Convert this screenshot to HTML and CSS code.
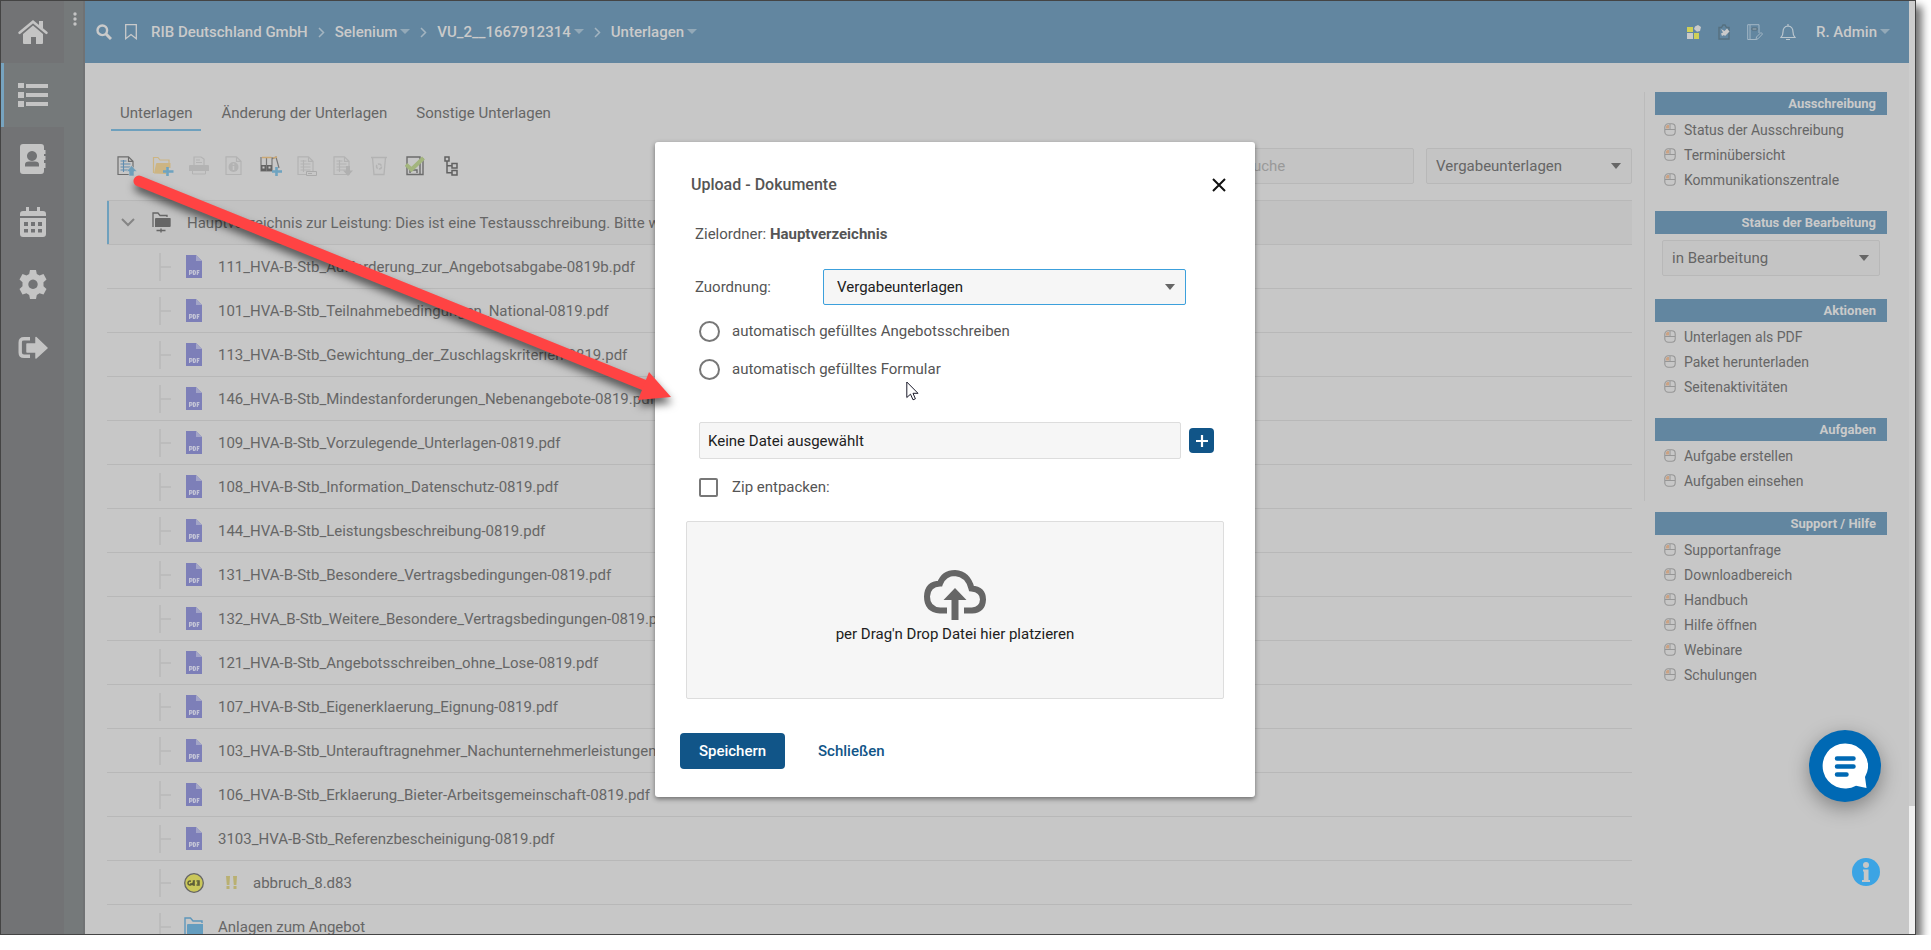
FILE: index.html
```html
<!DOCTYPE html>
<html lang="de">
<head>
<meta charset="utf-8">
<title>Unterlagen</title>
<link rel="stylesheet" href="styles.css">
</head>
<body>
<svg class="defs" aria-hidden="true">
  <symbol id="pdf" viewBox="0 0 16 23"><path fill="#7d7fb8" d="M0 0h10l6 6v17H0z"/><path fill="#a3a5c8" d="M10 0l6 6h-6z"/><path fill="none" stroke="#c3c4d6" stroke-width="1.200" d="M3.600 20v-4.400h1.500q1 0 1 1.300t-1 1.300H3.600M7.500 15.600v3.800h.8q1.200 0 1.200-1.900t-1.200-1.900zM11.300 20v-4.400H13.500M11.300 17.700h1.800"/></symbol>
  <symbol id="mouse" viewBox="0 0 12 13"><rect x=".8" y=".8" width="10.400" height="11.400" rx="3.500" fill="none" stroke="#969696" stroke-width="1.100"/><path d="M6 1v5.500M1 6.500h10" stroke="#969696"/><path d="M2 3.500Q2 2 3.500 2H5v3.500H2z" fill="#cba283"/></symbol>
  <symbol id="tree" viewBox="0 0 12 28"><path d="M1 0v28M1 14h11" stroke="#b9b9b9" stroke-width="1.500" fill="none"/></symbol>
  <symbol id="sheet" viewBox="0 0 20 20"><path d="M1 .8h10.500L16 5.300V18.500H1zM11.500.8v4.500H16" fill="none" stroke="currentColor" stroke-width="1.200"/></symbol>
  <symbol id="lines" viewBox="0 0 20 20"><path d="M3.500 5h6M3.500 8h10M3.500 11h10M3.500 14h10M6.500 4v12" fill="none" stroke="currentColor" stroke-width="1.100"/></symbol>
</svg>

<div class="window">
  <nav class="rail" aria-label="Hauptnavigation">
    <a class="rail-item home" href="#" aria-label="Start"><svg width="30" height="24" viewBox="0 0 30 24"><path fill="currentColor" d="M15 5.500L25 14v9q0 1-1 1h-6v-7h-5v7H6q-1 0-1-1v-9z"/><path fill="none" stroke="currentColor" stroke-width="2.600" stroke-linecap="round" d="M1.600 12.800L15 1.800l13.400 11"/><path fill="currentColor" d="M21 1h4v8l-4-3z"/></svg></a>
    <a class="rail-item active" href="#" aria-label="Liste"><svg width="30" height="26" viewBox="0 0 30 26"><path fill="currentColor" d="M0 1h6v5H0zM8 2h22v4H8zM0 10h6v6H0zM8 11h22v4H8zM0 19h6v6H0zM8 20h22v4H8z"/></svg></a>
    <a class="rail-item" href="#" aria-label="Kontakte"><svg width="28" height="30" viewBox="0 0 28 30"><path fill="currentColor" fill-rule="evenodd" d="M4 0h18q3 0 3 3v3h1.500v4H25v2h1.500v4H25v3h1.500v5H25v3q0 3-3 3H4q-3 0-3-3V3q0-3 3-3zM13 7a5 5 0 1 0 .01 0zM6 22.500h14v-2q0-3-4-3H10q-4 0-4 3z"/></svg></a>
    <a class="rail-item" href="#" aria-label="Kalender"><svg width="26" height="30" viewBox="0 0 26 30"><path fill="currentColor" fill-rule="evenodd" d="M6 0h3v4h8V0h3v4h3q3 0 3 3v2H0V7q0-3 3-3h3zM0 11h26v16q0 3-3 3H3q-3 0-3-3zM4 15v4h4v-4zM11 15v4h4v-4zM18 15v4h4v-4zM4 22v3.500h4V22zM11 22v3.500h4V22zM18 22v3.500h4V22z"/></svg></a>
    <a class="rail-item" href="#" aria-label="Einstellungen"><svg width="28" height="29" viewBox="0 0 28 29"><path fill="currentColor" fill-rule="evenodd" d="M11 0h6l.8 4 2.700 1.500L24.500 4l3 5.500-3 2.700v4l3 2.800-3 5.500-4-1.300L17.800 25 17 29h-6l-.8-4-2.700-1.800-4 1.300-3-5.500 3-2.800v-4L.5 9.500l3-5.500 4 1.500L10.200 4zM14 9.600a4.700 4.700 0 1 0 .01 0z"/></svg></a>
    <a class="rail-item" href="#" aria-label="Abmelden"><svg width="30" height="24" viewBox="0 0 30 24"><path fill="none" stroke="currentColor" stroke-width="3.400" d="M12 2.700H6Q2.200 2.700 2.200 6.500v10Q2.200 20.300 6 20.300h6"/><path fill="currentColor" stroke="currentColor" stroke-width="1.500" stroke-linejoin="round" d="M9 8h9V1.500L29 12 18 22V16H9z"/></svg></a>
  </nav>
  <div class="strip"><button class="dots" type="button" aria-label="Menü"><svg width="4" height="14" viewBox="0 0 4 14"><circle cx="2" cy="2" r="1.700"/><circle cx="2" cy="7" r="1.700"/><circle cx="2" cy="12" r="1.700"/></svg></button></div>

  <div class="page">
    <header class="topbar">
      <svg class="search-icon" width="16" height="16" viewBox="0 0 16 16"><circle cx="6.300" cy="6.300" r="4.800" fill="none" stroke="currentColor" stroke-width="2.400"/><path d="M10 10l5 5" stroke="currentColor" stroke-width="3"/></svg>
      <svg class="mark-icon" width="12" height="16" viewBox="0 0 12 16"><path d="M.7.7h10.600v14L6 10.500.7 14.700z" fill="none" stroke="currentColor" stroke-width="1.300"/></svg>
      <nav class="crumbs" aria-label="Pfad">
        <a href="#">RIB Deutschland GmbH</a>
        <svg class="sep" width="7" height="11" viewBox="0 0 7 11"><path d="M1 1l4.500 4.500L1 10"/></svg>
        <a class="drop" href="#">Selenium</a>
        <svg class="sep" width="7" height="11" viewBox="0 0 7 11"><path d="M1 1l4.500 4.500L1 10"/></svg>
        <a class="drop" href="#">VU_2__1667912314</a>
        <svg class="sep" width="7" height="11" viewBox="0 0 7 11"><path d="M1 1l4.500 4.500L1 10"/></svg>
        <a class="drop" href="#">Unterlagen</a>
      </nav>
      <div class="tools">
        <svg width="14" height="14" viewBox="0 0 14 14"><path fill="#cfcf57" d="M0 2h6v5H0zM7 8h5v6H7z"/><path fill="#cacaca" d="M0 8h6v6H0z"/><path fill="#cacaca" d="M8 1.500L11 0l3 2-1 4-3 .8L7 4z"/></svg>
        <svg width="12" height="16" viewBox="0 0 12 16"><path fill="none" stroke="#56707f" stroke-width="1.400" d="M1 3.500h2.500L5 1h2l1.500 2.500H11V15H1z"/><path fill="#cacaca" d="M3 5l3.500 2L9 4.500l2.500 3L7 12l-1-1-2 1-1-2.500 2-1z"/></svg>
        <svg width="16" height="17" viewBox="0 0 16 17"><path fill="none" stroke="#a3b7c5" d="M9 15.500H.7V.7H12V9M3 1v14.500"/><path stroke="#566c7b" fill="#a3b7c5" d="M5 4h5v2H5z"/><path fill="none" stroke="#a3b7c5" d="M9 15.500l.5-2.500 4.500-4.500 1.500 1.500-4.500 4.800z"/></svg>
        <svg width="16" height="17" viewBox="0 0 16 17"><path fill="none" stroke="#bac6ce" stroke-width="1.200" d="M1 13.500Q3 11.500 3 8q0-5.500 5-6 5 .5 5 6 0 3.500 2 5.500zM8 0v2M6 15.500h4"/></svg>
        <a class="drop user" href="#">R. Admin</a>
      </div>
    </header>

    <div class="content">
      <main class="main">
        <nav class="tabs" aria-label="Bereiche">
          <a class="tab current" href="#">Unterlagen</a>
          <a class="tab" href="#">Änderung der Unterlagen</a>
          <a class="tab" href="#">Sonstige Unterlagen</a>
        </nav>
        <div class="toolbar">
          <button class="tool" type="button" aria-label="Hochladen"><svg width="20" height="20" viewBox="0 0 20 20"><use href="#sheet" color="#6d6d6d"/><use href="#lines" color="#5f8caf"/><path fill="#6f9fba" stroke="#c7c7c7" stroke-width=".6" d="M14.500 9.500l5.500 6h-3V20h-5v-4.500H9.500z"/></svg></button>
          <button class="tool" type="button" aria-label="Neuer Ordner"><svg width="22" height="20" viewBox="0 0 22 20"><path fill="none" stroke="#cdb583" stroke-width="1.200" d="M1.500 17V1.500H6L8 4h9v3"/><path fill="#cdb583" d="M2 17.500L4 8q.3-1 1-1h13.500v5H14v6z"/><path stroke="#6ea3c0" stroke-width="2.600" d="M15.500 11v9M11 15.500h10.500"/></svg></button>
          <button class="tool" type="button" aria-label="Drucken"><svg width="20" height="20" viewBox="0 0 20 20"><path fill="none" stroke="#b3b3b3" stroke-width="1.200" d="M5 9V1h7l3 2v6M7 4h4M7 6.500h6"/><path fill="#b3b3b3" d="M1 9h18q1 0 1 1v5H0v-5q0-1 1-1z"/><path fill="none" stroke="#b3b3b3" d="M3.500 15v3h13v-3"/></svg></button>
          <button class="tool" type="button" aria-label="Information"><svg width="20" height="20" viewBox="0 0 20 20"><g color="#b3b3b3"><use href="#sheet"/></g><circle cx="8.500" cy="11" r="5" fill="#b3b3b3"/><path d="M8.500 7.500v1.300M8.500 10v4" stroke="#c7c7c7" stroke-width="1.600"/></svg></button>
          <button class="tool" type="button" aria-label="Ordner hinzufügen"><svg width="22" height="20" viewBox="0 0 22 20"><path fill="none" stroke="#777" stroke-width="1.200" d="M1 1v14h11V1M6.500 1v14M12 3l4-2 3 11"/><path stroke="#cba873" stroke-width="1.500" d="M2 1.500h9.500M13 2l4-1"/><path fill="#636363" d="M1 9h5v6H1zM7 9h5v6H7z"/><path fill="#c7c7c7" d="M2.500 10.500h2v2h-2zM8.500 10.500h2v2h-2z"/><path stroke="#6ea3c0" stroke-width="2.600" d="M16.500 11v9M12 15.500h10"/></svg></button>
          <button class="tool" type="button" aria-label="Umbenennen"><svg width="20" height="20" viewBox="0 0 20 20"><g color="#b3b3b3"><use href="#sheet"/><use href="#lines"/></g><path fill="#c7c7c7" stroke="#aaa" d="M9.500 15.500h10v4h-10zM11 17.500h4"/></svg></button>
          <button class="tool" type="button" aria-label="Herunterladen"><svg width="20" height="20" viewBox="0 0 20 20"><g color="#b3b3b3"><use href="#sheet"/><use href="#lines"/></g><path fill="#b0b0b0" d="M13 10h4v4.500h3L15 20l-5-5.500h3z"/></svg></button>
          <button class="tool" type="button" aria-label="Löschen"><svg width="18" height="20" viewBox="0 0 18 20"><path fill="none" stroke="#b3b3b3" stroke-width="1.300" d="M1 1.500h16M2.500 1.500L4 18.500h10l1.500-17"/><circle cx="9" cy="10.500" r="2.500" fill="none" stroke="#b3b3b3" stroke-width="1.500" stroke-dasharray="4 1.200"/></svg></button>
          <button class="tool" type="button" aria-label="Prüfen"><svg width="20" height="20" viewBox="0 0 20 20"><path fill="none" stroke="#6c6c6c" stroke-width="1.400" d="M2 18.500V1h13v17.500zM15 3h3v15.500h-3M5 17v-3h7v3"/><path fill="none" stroke="#a3b57e" stroke-width="4" d="M1 8.500l5.500 5L18.500 2"/></svg></button>
          <button class="tool" type="button" aria-label="Baumansicht"><svg width="16" height="20" viewBox="0 0 16 20"><path fill="none" stroke="#616161" stroke-width="1.500" d="M2 1h4v4H2zM9 7.500h5V12H9zM9 14.500h5V19H9zM4 5v11.700h5M4 9.700h5"/></svg></button>
          <input class="field find" type="text" aria-label="Suche" placeholder="Suche">
          <select class="field kind" aria-label="Unterlagenart"><option>Vergabeunterlagen</option></select>
        </div>
        <ul class="files">
          <li class="row root"><svg width="14" height="9" viewBox="0 0 14 9"><path d="M1 1l6 6 6-6" fill="none" stroke="#858585" stroke-width="2"/></svg><svg class="root-icon" width="19" height="21" viewBox="0 0 19 21"><path fill="none" stroke="#666" stroke-width="1.300" d="M1 15V1h5l2 2.500h7V5"/><path fill="#666" d="M4 6h14q.7 0 .7.700V14q0 1-1 1H3V7q0-1 1-1z"/><path fill="none" stroke="#666" stroke-width="1.400" d="M4.500 18.500h9M9 16.500v4"/></svg><span>Hauptverzeichnis zur Leistung: Dies ist eine Testausschreibung. Bitte w</span></li>
          <li class="row"><svg class="branch"><use href="#tree"/></svg><svg class="pdf"><use href="#pdf"/></svg><span>111_HVA-B-Stb_Aufforderung_zur_Angebotsabgabe-0819b.pdf</span></li>
          <li class="row"><svg class="branch"><use href="#tree"/></svg><svg class="pdf"><use href="#pdf"/></svg><span>101_HVA-B-Stb_Teilnahmebedingungen_National-0819.pdf</span></li>
          <li class="row"><svg class="branch"><use href="#tree"/></svg><svg class="pdf"><use href="#pdf"/></svg><span>113_HVA-B-Stb_Gewichtung_der_Zuschlagskriterien-0819.pdf</span></li>
          <li class="row"><svg class="branch"><use href="#tree"/></svg><svg class="pdf"><use href="#pdf"/></svg><span>146_HVA-B-Stb_Mindestanforderungen_Nebenangebote-0819.pdf</span></li>
          <li class="row"><svg class="branch"><use href="#tree"/></svg><svg class="pdf"><use href="#pdf"/></svg><span>109_HVA-B-Stb_Vorzulegende_Unterlagen-0819.pdf</span></li>
          <li class="row"><svg class="branch"><use href="#tree"/></svg><svg class="pdf"><use href="#pdf"/></svg><span>108_HVA-B-Stb_Information_Datenschutz-0819.pdf</span></li>
          <li class="row"><svg class="branch"><use href="#tree"/></svg><svg class="pdf"><use href="#pdf"/></svg><span>144_HVA-B-Stb_Leistungsbeschreibung-0819.pdf</span></li>
          <li class="row"><svg class="branch"><use href="#tree"/></svg><svg class="pdf"><use href="#pdf"/></svg><span>131_HVA-B-Stb_Besondere_Vertragsbedingungen-0819.pdf</span></li>
          <li class="row"><svg class="branch"><use href="#tree"/></svg><svg class="pdf"><use href="#pdf"/></svg><span>132_HVA_B-Stb_Weitere_Besondere_Vertragsbedingungen-0819.pdf</span></li>
          <li class="row"><svg class="branch"><use href="#tree"/></svg><svg class="pdf"><use href="#pdf"/></svg><span>121_HVA-B-Stb_Angebotsschreiben_ohne_Lose-0819.pdf</span></li>
          <li class="row"><svg class="branch"><use href="#tree"/></svg><svg class="pdf"><use href="#pdf"/></svg><span>107_HVA-B-Stb_Eigenerklaerung_Eignung-0819.pdf</span></li>
          <li class="row"><svg class="branch"><use href="#tree"/></svg><svg class="pdf"><use href="#pdf"/></svg><span>103_HVA-B-Stb_Unterauftragnehmer_Nachunternehmerleistungen-</span></li>
          <li class="row"><svg class="branch"><use href="#tree"/></svg><svg class="pdf"><use href="#pdf"/></svg><span>106_HVA-B-Stb_Erklaerung_Bieter-Arbeitsgemeinschaft-0819.pdf</span></li>
          <li class="row"><svg class="branch"><use href="#tree"/></svg><svg class="pdf"><use href="#pdf"/></svg><span>3103_HVA-B-Stb_Referenzbescheinigung-0819.pdf</span></li>
          <li class="row"><svg class="branch"><use href="#tree"/></svg><svg class="round" width="20" height="20" viewBox="0 0 20 20"><circle cx="10" cy="10" r="9.300" fill="#cac75a" stroke="#666" stroke-width="1.300"/><path fill="none" stroke="#5d5d38" stroke-width="1.500" d="M7 8.300Q4 7.500 4 10t3 1.700V10M8 12l2-4M11 8h-1.500v4H11M9.500 10H11M12.500 8H15v4h-2.500M13 10h2"/></svg><svg class="alert" width="11" height="13" viewBox="0 0 11 13"><path fill="#b9b072" d="M0 0h4l-.6 9H.8zM.5 10h3v3h-3zM7 0h4l-.6 9H7.800zM7.500 10h3v3h-3z"/></svg><span>abbruch_8.d83</span></li>
          <li class="row"><svg class="branch"><use href="#tree"/></svg><svg class="round" width="20" height="20" viewBox="0 0 20 20"><path fill="none" stroke="#5e97bb" stroke-width="1.400" d="M1 18V1h5.500l2.500 3h9v2"/><path fill="#649dbf" d="M4 7h15v12H3V8q0-1 1-1z"/></svg><span>Anlagen zum Angebot</span></li>
        </ul>
      </main>

      <aside class="side">
        <div class="side-top">
          <section><h2>Ausschreibung</h2><ul>
            <li><svg class="mouse"><use href="#mouse"/></svg><a href="#">Status der Ausschreibung</a></li>
            <li><svg class="mouse"><use href="#mouse"/></svg><a href="#">Terminübersicht</a></li>
            <li><svg class="mouse"><use href="#mouse"/></svg><a href="#">Kommunikationszentrale</a></li></ul></section>
          <section><h2>Status der Bearbeitung</h2>
            <select class="field status" aria-label="Status der Bearbeitung"><option>in Bearbeitung</option></select></section>
          <section><h2>Aktionen</h2><ul>
            <li><svg class="mouse"><use href="#mouse"/></svg><a href="#">Unterlagen als PDF</a></li>
            <li><svg class="mouse"><use href="#mouse"/></svg><a href="#">Paket herunterladen</a></li>
            <li><svg class="mouse"><use href="#mouse"/></svg><a href="#">Seitenaktivitäten</a></li></ul></section>
          <section><h2>Aufgaben</h2><ul>
            <li><svg class="mouse"><use href="#mouse"/></svg><a href="#">Aufgabe erstellen</a></li>
            <li><svg class="mouse"><use href="#mouse"/></svg><a href="#">Aufgaben einsehen</a></li></ul></section>
        </div>
        <section class="support"><h2>Support / Hilfe</h2><ul>
          <li><svg class="mouse"><use href="#mouse"/></svg><a href="#">Supportanfrage</a></li>
          <li><svg class="mouse"><use href="#mouse"/></svg><a href="#">Downloadbereich</a></li>
          <li><svg class="mouse"><use href="#mouse"/></svg><a href="#">Handbuch</a></li>
          <li><svg class="mouse"><use href="#mouse"/></svg><a href="#">Hilfe öffnen</a></li>
          <li><svg class="mouse"><use href="#mouse"/></svg><a href="#">Webinare</a></li>
          <li><svg class="mouse"><use href="#mouse"/></svg><a href="#">Schulungen</a></li></ul></section>
      </aside>
    </div>
  </div>
  <div class="scroll"><div class="scroll-rest"></div></div>

  <div class="overlay">
    <form class="dialog" role="dialog" aria-labelledby="dialog-title">
      <div class="dialog-head">
        <h1 id="dialog-title">Upload - Dokumente</h1>
        <button class="close" type="button" aria-label="Dialog schließen"><svg width="14" height="14" viewBox="0 0 14 14"><path d="M1 1l12 12M13 1L1 13" stroke="#111" stroke-width="2"/></svg></button>
      </div>
      <p class="target">Zielordner: <b>Hauptverzeichnis</b></p>
      <div class="assign"><label for="assign">Zuordnung:</label><select class="field" id="assign"><option>Vergabeunterlagen</option></select></div>
      <label class="choice"><input type="radio" name="auto"><span>automatisch gefülltes Angebotsschreiben</span></label>
      <label class="choice"><input type="radio" name="auto"><span>automatisch gefülltes Formular</span></label>
      <div class="file"><input class="field" type="text" aria-label="Datei" value="Keine Datei ausgewählt" readonly><button class="add" type="button" aria-label="Datei hinzufügen"><svg width="14" height="14" viewBox="0 0 14 14"><path d="M7 1v12M1 7h12" stroke="#fff" stroke-width="2.200"/></svg></button></div>
      <label class="choice zip"><input type="checkbox"><span>Zip entpacken:</span></label>
      <div class="dropzone">
        <svg width="64" height="50" viewBox="0 0 64 50"><path fill="none" stroke="#666" stroke-width="6" d="M24 40.500H17Q4 39.500 4 26.500 4.500 14 17 13.500 21 3 32 3 45 4 48.500 18.500 60 19.500 60 29.500 59.500 40 49 40.500h-8"/><path fill="#666" d="M32 18l11.500 12H35.500V50h-7V30H20.500z"/></svg>
        <p>per Drag'n Drop Datei hier platzieren</p>
      </div>
      <div class="actions"><button class="save" type="submit">Speichern</button><button class="cancel" type="button">Schließen</button></div>
    </form>
  </div>

  <button class="chat" type="button" aria-label="Chat"><svg width="46" height="46" viewBox="0 0 46 46"><path fill="#fff" d="M23 .5A22.500 22.500 0 1 0 34 42.700L44.500 45 43 34A22.500 22.500 0 0 0 23 .5z"/><path d="M15 15.500h16.500M15 23.500h16.500M15 31.500h9.500" stroke="#0069b4" stroke-width="4.500" stroke-linecap="round"/></svg></button>
  <button class="info" type="button" aria-label="Information"><svg width="28" height="28" viewBox="0 0 28 28"><circle cx="14" cy="14" r="14" fill="#3ca4e4"/><circle cx="14" cy="7" r="3" fill="#c7c7c7"/><path fill="#c7c7c7" d="M11 11.500h5.500V22H18v2h-8v-2h1.800v-8.500H11z"/></svg></button>
  <svg class="arrow" width="560" height="250" viewBox="0 0 560 250" aria-hidden="true"><path d="M18 20L528 226" stroke="#ff4343" stroke-width="11" stroke-linecap="round"/><path fill="#ff4343" d="M550 236l-22-25-11 28z"/></svg>
  <svg class="pointer" width="13" height="20" viewBox="0 0 13 20" aria-hidden="true"><path fill="#fff" stroke="#1a1a2a" d="M.8 1v15.500l3.700-3.300 2.500 5.600 2.400-1-2.400-5.500h5z"/></svg>
</div>
</body>
</html>
```

FILE: styles.css
```css
* { box-sizing: border-box; }
body { margin: 0; background: #fff; color: #666; font: 15px/20px Roboto, sans-serif; }
ul, p, h1, h2 { margin: 0; padding: 0; }
ul { list-style: none; }
a { color: inherit; text-decoration: none; }
button { padding: 0; border: 0; background: none; font: inherit; }
svg { display: block; flex: none; }
.defs { position: absolute; width: 0; height: 0; }

.window { position: relative; display: flex; height: calc(100vh - 15px); margin-right: 15px; border: 1px solid #444; background: #c7c7c7; box-shadow: 6px 6px 8px rgba(0, 0, 0, .55); }

.rail { flex: none; width: 63px; background: #727375; color: #c4c4c4; }
.rail-item { display: flex; align-items: center; justify-content: center; height: 63px; }
.rail-item.home { height: 62px; }
.rail-item.active { height: 64px; background: #75797a; box-shadow: inset 3px 0 #77a4c0; }
.strip { flex: none; width: 21px; background: #75797a; border-right: 2px solid #707274; }
.dots { display: block; margin: 11px auto 0 9px; fill: #c4c4c4; }

.page { flex: 1; min-width: 0; display: flex; flex-direction: column; overflow: hidden; }
.topbar { flex: none; display: flex; align-items: center; height: 62px; padding: 0 19px 0 11px; background: #6286a0; color: #cacaca; font-weight: 500; }
.mark-icon { margin: 0 14px 0 13px; }
.crumbs, .tools { display: flex; align-items: center; }
.crumbs { gap: 10px; }
.sep { fill: none; stroke: #a3b4c0; stroke-width: 1.5; }
.drop::after { content: ""; display: inline-block; margin: 0 0 3px 3px; border: 5px solid transparent; border-top-color: #93a9b8; border-bottom: 0; }
.tools { margin-left: auto; gap: 17px; }
.user { margin-left: 3px; }

.content { flex: 1; min-height: 0; display: flex; padding: 29px 22px 0 22px; }
.main { flex: 1; min-width: 0; overflow: hidden; }
.tabs { display: flex; gap: 11px; padding-left: 4px; }
.tab { height: 39px; padding: 11px 9px 0; border-bottom: 2px solid transparent; }
.tab.current { border-color: #6ea0bd; }
.toolbar { display: flex; align-items: center; height: 69px; padding-left: 2px; }
.tool { display: flex; align-items: center; justify-content: center; width: 36px; height: 28px; }
.field { height: 36px; padding: 0 9px; border: 1px solid #b8b8b8; border-radius: 2px; background: #c4c4c4; color: #666; font: inherit; }
.field::placeholder { color: #999; }
select.field { appearance: none; background: #c4c4c4 url("data:image/svg+xml,%3Csvg xmlns='http://www.w3.org/2000/svg' width='10' height='6'%3E%3Cpath fill='%23666' d='M0 0h10L5 6z'/%3E%3C/svg%3E") no-repeat right 10px center; }
.find { width: 180px; margin-left: auto; }
.kind { width: 206px; margin-left: 12px; }

.row { display: flex; align-items: center; height: 44px; padding-left: 52px; border-bottom: 1px solid #b8b8b8; white-space: nowrap; }
.row span { margin-left: 16px; }
.root { height: 45px; padding-left: 14px; border-top: 1px solid #b8b8b8; background: #c2c2c2; box-shadow: inset 2px 0 #6ea0bd; }
.root-icon { margin-left: 17px; }
.branch { width: 12px; height: 28px; }
.pdf { width: 16px; height: 23px; margin-left: 15px; }
.round { margin: 0 -2px 0 13px; }
.alert { margin-left: 24px; }

.side { flex: none; width: 243px; margin-left: 12px; font-size: 14px; }
.side-top { display: flex; flex-direction: column; gap: 19px; padding: 0 0 8px 10px; border-left: 1px solid #bbb; }
.side h2 { height: 23px; margin-bottom: 2px; padding-right: 11px; background: #6286a0; color: #cacaca; font-size: 13px; font-weight: 700; line-height: 24px; text-align: right; }
.side li { display: flex; align-items: center; height: 25px; padding-left: 9px; }
.mouse { width: 12px; height: 13px; margin-right: 8px; }
.status { display: block; width: calc(100% - 14px); margin: 6px 7px 4px; font-size: 15px; }
.support { padding-left: 11px; margin-top: 11px; }
.scroll { flex: none; display: flex; align-items: flex-end; width: 6px; background: #cdcdcd; }
.scroll-rest { width: 100%; height: 128px; background: #f0f0f0; }

.overlay { position: absolute; inset: 0 6px 0 0; display: flex; justify-content: center; align-items: flex-start; padding-top: 141px; }
.dialog { width: 600px; padding: 33px 25px 28px; border-radius: 3px; background: #fff; color: #555; box-shadow: 0 2px 5px rgba(0, 0, 0, .45); }
.dialog .field { border-color: #ddd; background-color: #f6f6f6; color: #212121; }
.dialog-head { display: flex; align-items: center; justify-content: space-between; padding: 0 4px 0 11px; }
.dialog h1 { font-size: 16px; font-weight: 500; line-height: 20px; }
.target { margin: 29px 0 25px 15px; }
.assign { display: flex; align-items: center; margin: 0 44px 14px 15px; }
.assign label { width: 128px; }
.assign .field { flex: 1; padding-left: 13px; border-color: #3ca0dc; }
.choice { display: flex; align-items: center; height: 24px; margin: 0 0 14px 19px; }
.choice input { appearance: none; width: 21px; height: 21px; margin: 0 12px 0 0; border: 2px solid #777; border-radius: 50%; background: #fff; }
.zip input { width: 19px; height: 19px; margin: 0 14px 0 0; border-radius: 2px; }
.file { display: flex; align-items: center; gap: 8px; margin: 41px 16px 16px 19px; }
.file .field { flex: 1; height: 37px; padding: 0 8px; }
.add { display: flex; align-items: center; justify-content: center; width: 25px; height: 25px; border-radius: 4px; background: #115588; }
.dropzone { display: flex; flex-direction: column; align-items: center; gap: 4px; height: 178px; margin: 22px 6px 34px; padding-top: 48px; border: 1px solid #ddd; border-radius: 2px; background: #f6f6f6; color: #212121; }
.actions { display: flex; gap: 16px; font-weight: 500; }
.save, .cancel { height: 36px; border-radius: 4px; }
.save { width: 105px; background: #115588; color: #fff; }
.cancel { padding: 0 17px; color: #115588; }

.chat { position: absolute; right: 34px; bottom: 132px; display: flex; align-items: center; justify-content: center; width: 72px; height: 72px; border-radius: 50%; background: #0069b4; box-shadow: 0 6px 20px rgba(0, 0, 0, .35); }
.info { position: absolute; right: 35px; bottom: 48px; }
.arrow { position: absolute; left: 120px; top: 160px; filter: drop-shadow(1px 6px 4px rgba(0, 0, 0, .6)); }
.pointer { position: absolute; left: 905px; top: 380px; }
```
